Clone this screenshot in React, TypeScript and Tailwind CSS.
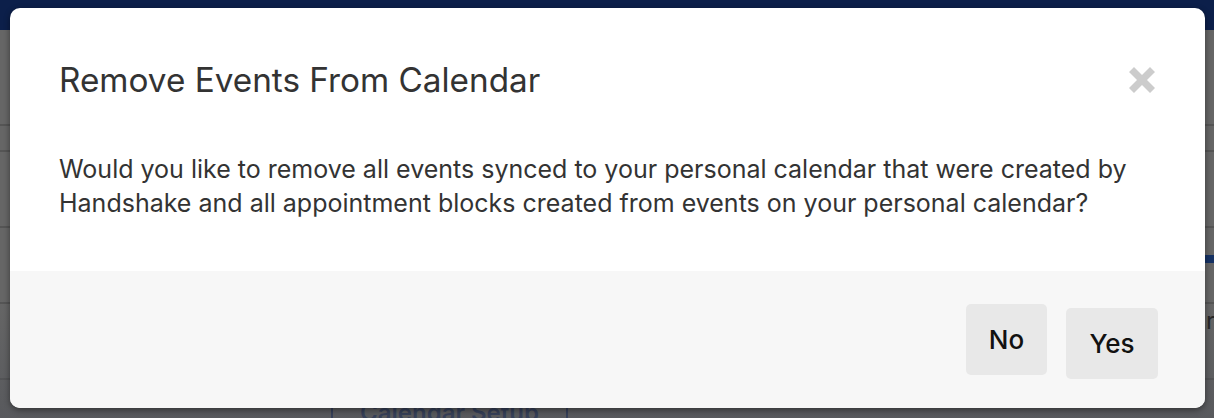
import React from "react";

export default function App() {
  return (
    <div
      className="relative w-[1214px] h-[418px] overflow-hidden bg-[#666666]"
      style={{ fontFamily: "Inter, 'Noto Sans', sans-serif" }}
    >
      {/* underlying page (dimmed) */}
      <div className="h-[30px] bg-[#0c1f4a]" />
      <div className="flex flex-col">
        <div className="h-[96px] border-b-2 border-[#555]" />
        <div className="h-[26px] border-b-2 border-[#555]" />
        <div className="h-[76px] border-b-2 border-[#555]" />
        <div className="h-[76px] border-b-2 border-[#555]" />
        <div className="h-[76px] border-b-2 border-[#555]" />
      </div>
      <div className="absolute left-[331px] top-[392px] w-[237px] h-[40px] border-x-2 border-[#13285a] flex justify-center pt-[6px] text-[24px] leading-[30px] font-semibold text-[#13285a]">
        Calendar Setup
      </div>
      <div className="absolute right-0 top-[255px] w-[10px] h-[8px] bg-[#163264]" />
      <div className="absolute left-[1206px] top-[303px] text-[24px] text-[#222]">r</div>
      <div className="absolute inset-x-0 bottom-0 h-[120px] bg-gradient-to-b from-transparent to-[#4f5157]/60" />

      {/* modal */}
      <div className="absolute left-[10px] top-[8px] w-[1195px] h-[400px] bg-white rounded-[10px] overflow-hidden shadow-[0_2px_6px_rgba(0,0,0,0.45)] flex flex-col">
        <div className="flex items-start justify-between pl-[49px] pr-[50px] pt-[53px]">
          <h2 className="text-[33.3px] leading-[38px] text-[#333] font-normal">
            Remove Events From Calendar
          </h2>
          <button className="mt-[6px]" aria-label="Close">
            <svg width="26" height="26" viewBox="0 0 26 26">
              <path
                d="M0 5 L5 0 L13 8 L21 0 L26 5 L18 13 L26 21 L21 26 L13 18 L5 26 L0 21 L8 13 Z"
                fill="#cccccc"
              />
            </svg>
          </button>
        </div>
        <p className="pl-[49px] pr-[20px] pt-[53px] text-[25px] leading-[34px] text-[#333] whitespace-nowrap">
          Would you like to remove all events synced to your personal calendar that were created by
          <br />
          Handshake and all appointment blocks created from events on your personal calendar?
        </p>
        <div className="mt-auto h-[137px] bg-[#f7f7f7] flex items-start justify-end gap-[19px] pr-[47px] pt-[33px]">
          <button className="w-[81px] h-[71px] rounded-[5px] bg-[#e8e8e8] text-[26px] font-medium text-[#111]">
            No
          </button>
          <button className="mt-[4px] w-[92px] h-[71px] rounded-[5px] bg-[#e8e8e8] text-[26px] font-medium text-[#111]">
            Yes
          </button>
        </div>
      </div>
    </div>
  );
}
